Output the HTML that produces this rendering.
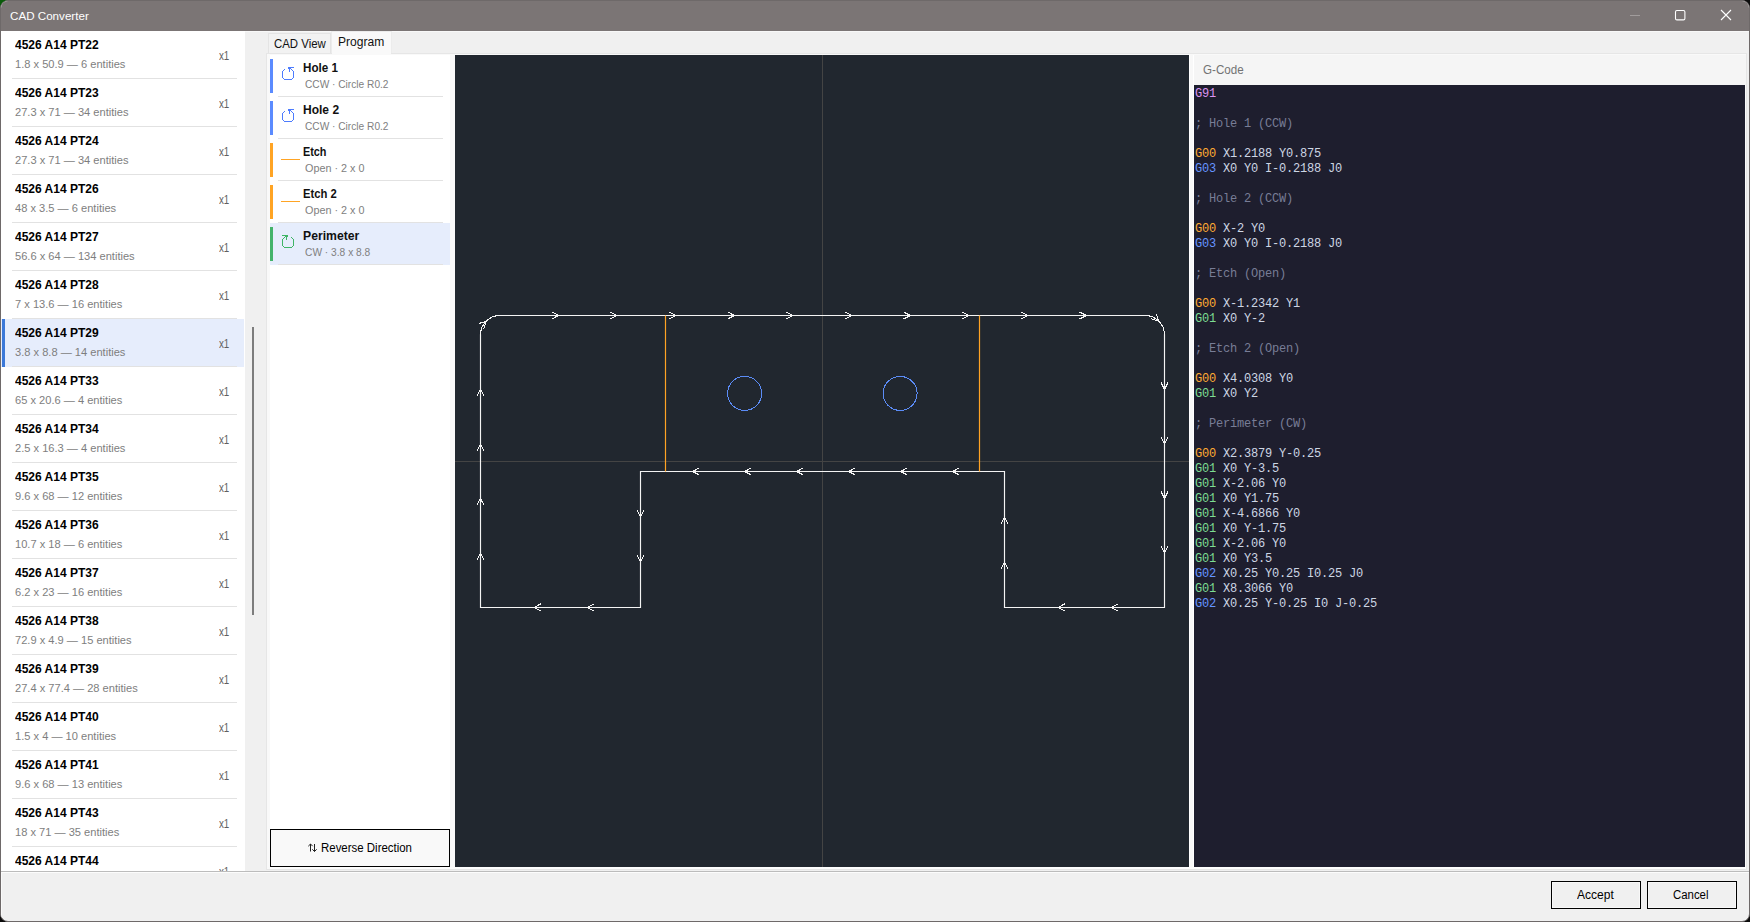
<!DOCTYPE html>
<html><head><meta charset="utf-8"><title>CAD Converter</title>
<style>
html,body{margin:0;padding:0;}
body{width:1750px;height:922px;overflow:hidden;background:#0b0b0b;position:relative;
 font-family:"Liberation Sans",sans-serif;}
.t{position:absolute;white-space:pre;line-height:1;transform-origin:0 50%;display:inline-block;}
.s{font-family:"Liberation Sans",sans-serif;}
.m{font-family:"Liberation Mono",monospace;}
.a{position:absolute;}
#win{position:absolute;left:0;top:0;width:1748px;height:920px;border:1px solid #6e6969;
 border-radius:8px;background:#f0f0f0;overflow:hidden;}
#in{position:absolute;left:-1px;top:-1px;width:1750px;height:922px;}
</style></head><body>
<div class="a" style="left:0;top:0;width:12px;height:12px;background:#0a5a0a"></div>
<div id="win"><div id="in">

<div class="a" style="left:0;top:0;width:1750px;height:31px;background:#7b7575"></div>
<span id="t1" class="t s" style="left:9.60px;top:10.20px;font-size:11.7px;color:#fff;font-weight:400;transform:scaleX(0.9943);">CAD Converter</span>
<svg class="a" style="left:1620px;top:0" width="130" height="31" viewBox="1620 0 130 31" fill="none"><path d="M1630 15.5H1640" stroke="#a19c9c" stroke-width="1"/><rect x="1675.5" y="10.5" width="9.4" height="9.4" rx="1.4" stroke="#fff" stroke-width="1.1"/><path d="M1721 10L1731 20M1731 10L1721 20" stroke="#fff" stroke-width="1.1"/></svg>
<div class="a" style="left:245px;top:31px;width:1504px;height:1px;background:#f8f8f8"></div>
<div class="a" style="left:1px;top:31px;width:244px;height:840px;background:#fff;overflow:hidden">
<div class="a" style="left:11px;top:47px;width:225px;height:1px;background:#e2e2e2"></div>
<span id="t2" class="t s" style="left:14.30px;top:8.14px;font-size:12px;color:#000;font-weight:700;transform:scaleX(0.9997);">4526 A14 PT22</span>
<span id="t3" class="t s" style="left:14.00px;top:27.59px;font-size:11px;color:#7e7e7e;font-weight:400;transform:scaleX(1.0087);">1.8 x 50.9 — 6 entities</span>
<span id="t4" class="t s" style="left:217.70px;top:18.84px;font-size:12px;color:#606060;font-weight:400;transform:scaleX(0.8118);">x1</span>
<div class="a" style="left:11px;top:95px;width:225px;height:1px;background:#e2e2e2"></div>
<span id="t5" class="t s" style="left:14.30px;top:56.14px;font-size:12px;color:#000;font-weight:700;transform:scaleX(0.9997);">4526 A14 PT23</span>
<span id="t6" class="t s" style="left:14.00px;top:75.59px;font-size:11px;color:#7e7e7e;font-weight:400;transform:scaleX(1.0087);">27.3 x 71 — 34 entities</span>
<span id="t7" class="t s" style="left:217.70px;top:66.84px;font-size:12px;color:#606060;font-weight:400;transform:scaleX(0.8118);">x1</span>
<div class="a" style="left:11px;top:143px;width:225px;height:1px;background:#e2e2e2"></div>
<span id="t8" class="t s" style="left:14.30px;top:104.14px;font-size:12px;color:#000;font-weight:700;transform:scaleX(0.9997);">4526 A14 PT24</span>
<span id="t9" class="t s" style="left:14.00px;top:123.59px;font-size:11px;color:#7e7e7e;font-weight:400;transform:scaleX(1.0087);">27.3 x 71 — 34 entities</span>
<span id="t10" class="t s" style="left:217.70px;top:114.84px;font-size:12px;color:#606060;font-weight:400;transform:scaleX(0.8118);">x1</span>
<div class="a" style="left:11px;top:191px;width:225px;height:1px;background:#e2e2e2"></div>
<span id="t11" class="t s" style="left:14.30px;top:152.14px;font-size:12px;color:#000;font-weight:700;transform:scaleX(0.9997);">4526 A14 PT26</span>
<span id="t12" class="t s" style="left:14.00px;top:171.59px;font-size:11px;color:#7e7e7e;font-weight:400;transform:scaleX(1.0087);">48 x 3.5 — 6 entities</span>
<span id="t13" class="t s" style="left:217.70px;top:162.84px;font-size:12px;color:#606060;font-weight:400;transform:scaleX(0.8118);">x1</span>
<div class="a" style="left:11px;top:239px;width:225px;height:1px;background:#e2e2e2"></div>
<span id="t14" class="t s" style="left:14.30px;top:200.14px;font-size:12px;color:#000;font-weight:700;transform:scaleX(0.9997);">4526 A14 PT27</span>
<span id="t15" class="t s" style="left:14.00px;top:219.59px;font-size:11px;color:#7e7e7e;font-weight:400;transform:scaleX(1.0087);">56.6 x 64 — 134 entities</span>
<span id="t16" class="t s" style="left:217.70px;top:210.84px;font-size:12px;color:#606060;font-weight:400;transform:scaleX(0.8118);">x1</span>
<div class="a" style="left:11px;top:287px;width:225px;height:1px;background:#e2e2e2"></div>
<span id="t17" class="t s" style="left:14.30px;top:248.14px;font-size:12px;color:#000;font-weight:700;transform:scaleX(0.9997);">4526 A14 PT28</span>
<span id="t18" class="t s" style="left:14.00px;top:267.59px;font-size:11px;color:#7e7e7e;font-weight:400;transform:scaleX(1.0087);">7 x 13.6 — 16 entities</span>
<span id="t19" class="t s" style="left:217.70px;top:258.84px;font-size:12px;color:#606060;font-weight:400;transform:scaleX(0.8118);">x1</span>
<div class="a" style="left:0;top:288px;width:243px;height:48px;background:#e6edfc"></div>
<div class="a" style="left:1px;top:288px;width:3px;height:48px;background:#3b78d8"></div>
<div class="a" style="left:11px;top:335px;width:225px;height:1px;background:#e2e2e2"></div>
<span id="t20" class="t s" style="left:14.30px;top:296.14px;font-size:12px;color:#000;font-weight:700;transform:scaleX(0.9997);">4526 A14 PT29</span>
<span id="t21" class="t s" style="left:14.00px;top:315.59px;font-size:11px;color:#7e7e7e;font-weight:400;transform:scaleX(1.0087);">3.8 x 8.8 — 14 entities</span>
<span id="t22" class="t s" style="left:217.70px;top:306.84px;font-size:12px;color:#606060;font-weight:400;transform:scaleX(0.8118);">x1</span>
<div class="a" style="left:11px;top:383px;width:225px;height:1px;background:#e2e2e2"></div>
<span id="t23" class="t s" style="left:14.30px;top:344.14px;font-size:12px;color:#000;font-weight:700;transform:scaleX(0.9997);">4526 A14 PT33</span>
<span id="t24" class="t s" style="left:14.00px;top:363.59px;font-size:11px;color:#7e7e7e;font-weight:400;transform:scaleX(1.0087);">65 x 20.6 — 4 entities</span>
<span id="t25" class="t s" style="left:217.70px;top:354.84px;font-size:12px;color:#606060;font-weight:400;transform:scaleX(0.8118);">x1</span>
<div class="a" style="left:11px;top:431px;width:225px;height:1px;background:#e2e2e2"></div>
<span id="t26" class="t s" style="left:14.30px;top:392.14px;font-size:12px;color:#000;font-weight:700;transform:scaleX(0.9997);">4526 A14 PT34</span>
<span id="t27" class="t s" style="left:14.00px;top:411.59px;font-size:11px;color:#7e7e7e;font-weight:400;transform:scaleX(1.0087);">2.5 x 16.3 — 4 entities</span>
<span id="t28" class="t s" style="left:217.70px;top:402.84px;font-size:12px;color:#606060;font-weight:400;transform:scaleX(0.8118);">x1</span>
<div class="a" style="left:11px;top:479px;width:225px;height:1px;background:#e2e2e2"></div>
<span id="t29" class="t s" style="left:14.30px;top:440.14px;font-size:12px;color:#000;font-weight:700;transform:scaleX(0.9997);">4526 A14 PT35</span>
<span id="t30" class="t s" style="left:14.00px;top:459.59px;font-size:11px;color:#7e7e7e;font-weight:400;transform:scaleX(1.0087);">9.6 x 68 — 12 entities</span>
<span id="t31" class="t s" style="left:217.70px;top:450.84px;font-size:12px;color:#606060;font-weight:400;transform:scaleX(0.8118);">x1</span>
<div class="a" style="left:11px;top:527px;width:225px;height:1px;background:#e2e2e2"></div>
<span id="t32" class="t s" style="left:14.30px;top:488.14px;font-size:12px;color:#000;font-weight:700;transform:scaleX(0.9997);">4526 A14 PT36</span>
<span id="t33" class="t s" style="left:14.00px;top:507.59px;font-size:11px;color:#7e7e7e;font-weight:400;transform:scaleX(1.0087);">10.7 x 18 — 6 entities</span>
<span id="t34" class="t s" style="left:217.70px;top:498.84px;font-size:12px;color:#606060;font-weight:400;transform:scaleX(0.8118);">x1</span>
<div class="a" style="left:11px;top:575px;width:225px;height:1px;background:#e2e2e2"></div>
<span id="t35" class="t s" style="left:14.30px;top:536.14px;font-size:12px;color:#000;font-weight:700;transform:scaleX(0.9997);">4526 A14 PT37</span>
<span id="t36" class="t s" style="left:14.00px;top:555.59px;font-size:11px;color:#7e7e7e;font-weight:400;transform:scaleX(1.0087);">6.2 x 23 — 16 entities</span>
<span id="t37" class="t s" style="left:217.70px;top:546.84px;font-size:12px;color:#606060;font-weight:400;transform:scaleX(0.8118);">x1</span>
<div class="a" style="left:11px;top:623px;width:225px;height:1px;background:#e2e2e2"></div>
<span id="t38" class="t s" style="left:14.30px;top:584.14px;font-size:12px;color:#000;font-weight:700;transform:scaleX(0.9997);">4526 A14 PT38</span>
<span id="t39" class="t s" style="left:14.00px;top:603.59px;font-size:11px;color:#7e7e7e;font-weight:400;transform:scaleX(1.0087);">72.9 x 4.9 — 15 entities</span>
<span id="t40" class="t s" style="left:217.70px;top:594.84px;font-size:12px;color:#606060;font-weight:400;transform:scaleX(0.8118);">x1</span>
<div class="a" style="left:11px;top:671px;width:225px;height:1px;background:#e2e2e2"></div>
<span id="t41" class="t s" style="left:14.30px;top:632.14px;font-size:12px;color:#000;font-weight:700;transform:scaleX(0.9997);">4526 A14 PT39</span>
<span id="t42" class="t s" style="left:14.00px;top:651.59px;font-size:11px;color:#7e7e7e;font-weight:400;transform:scaleX(1.0087);">27.4 x 77.4 — 28 entities</span>
<span id="t43" class="t s" style="left:217.70px;top:642.84px;font-size:12px;color:#606060;font-weight:400;transform:scaleX(0.8118);">x1</span>
<div class="a" style="left:11px;top:719px;width:225px;height:1px;background:#e2e2e2"></div>
<span id="t44" class="t s" style="left:14.30px;top:680.14px;font-size:12px;color:#000;font-weight:700;transform:scaleX(0.9997);">4526 A14 PT40</span>
<span id="t45" class="t s" style="left:14.00px;top:699.59px;font-size:11px;color:#7e7e7e;font-weight:400;transform:scaleX(1.0087);">1.5 x 4 — 10 entities</span>
<span id="t46" class="t s" style="left:217.70px;top:690.84px;font-size:12px;color:#606060;font-weight:400;transform:scaleX(0.8118);">x1</span>
<div class="a" style="left:11px;top:767px;width:225px;height:1px;background:#e2e2e2"></div>
<span id="t47" class="t s" style="left:14.30px;top:728.14px;font-size:12px;color:#000;font-weight:700;transform:scaleX(0.9997);">4526 A14 PT41</span>
<span id="t48" class="t s" style="left:14.00px;top:747.59px;font-size:11px;color:#7e7e7e;font-weight:400;transform:scaleX(1.0087);">9.6 x 68 — 13 entities</span>
<span id="t49" class="t s" style="left:217.70px;top:738.84px;font-size:12px;color:#606060;font-weight:400;transform:scaleX(0.8118);">x1</span>
<div class="a" style="left:11px;top:815px;width:225px;height:1px;background:#e2e2e2"></div>
<span id="t50" class="t s" style="left:14.30px;top:776.14px;font-size:12px;color:#000;font-weight:700;transform:scaleX(0.9997);">4526 A14 PT43</span>
<span id="t51" class="t s" style="left:14.00px;top:795.59px;font-size:11px;color:#7e7e7e;font-weight:400;transform:scaleX(1.0087);">18 x 71 — 35 entities</span>
<span id="t52" class="t s" style="left:217.70px;top:786.84px;font-size:12px;color:#606060;font-weight:400;transform:scaleX(0.8118);">x1</span>
<div class="a" style="left:11px;top:863px;width:225px;height:1px;background:#e2e2e2"></div>
<span id="t53" class="t s" style="left:14.30px;top:824.14px;font-size:12px;color:#000;font-weight:700;transform:scaleX(0.9997);">4526 A14 PT44</span>
<span id="t54" class="t s" style="left:217.70px;top:834.84px;font-size:12px;color:#606060;font-weight:400;transform:scaleX(0.8118);">x1</span>
</div>
<div class="a" style="left:252px;top:327px;width:2px;height:288px;background:#7d7d7d"></div>
<div class="a" style="left:268px;top:33px;width:63px;height:21px;background:#f2f2f2;border:1px solid #e4e4e4;box-sizing:border-box"></div>
<div class="a" style="left:331px;top:31px;width:61px;height:23px;background:#f9f9f9;border:1px solid #ececec;border-bottom:none;box-sizing:border-box"></div>
<span id="t55" class="t s" style="left:273.80px;top:37.64px;font-size:12px;color:#111;font-weight:400;transform:scaleX(0.9510);">CAD View</span>
<span id="t56" class="t s" style="left:337.60px;top:36.04px;font-size:12px;color:#111;font-weight:400;transform:scaleX(1.0062);">Program</span>
<div class="a" style="left:266px;top:53px;width:1481px;height:817px;background:#f9f9f9;border:1px solid #e6e6e6;box-sizing:border-box"></div>
<div class="a" style="left:332px;top:53px;width:59px;height:1px;background:#f9f9f9"></div>
<div class="a" style="left:270px;top:55px;width:180px;height:774px;background:#fff"></div>
<div class="a" style="left:278px;top:96px;width:165px;height:1px;background:#e2e2e2"></div>
<div class="a" style="left:270px;top:59px;width:3px;height:34px;background:#5b8bff"></div>
<svg class="a" style="left:276px;top:55px" width="24" height="30" viewBox="276 55 24 30" shape-rendering="crispEdges"><path d="M288 67h6v1h-6zM288 68h3v1h-3zM289 69h1v3h-1zM284 69h1v1h-1zM283 70h1v1h-1zM282 71h1v7h-1zM283 78h1v1h-1zM284 79h8v1h-8zM292 78h1v1h-1zM293 71h1v7h-1zM292 70h1v1h-1zM291 69h1v1h-1z" fill="#4d7cfe"/></svg>
<span id="t57" class="t s" style="left:303.40px;top:61.64px;font-size:12px;color:#111;font-weight:700;transform:scaleX(0.9690);">Hole 1</span>
<span id="t58" class="t s" style="left:304.50px;top:78.91px;font-size:10.5px;color:#808080;font-weight:400;transform:scaleX(0.9671);">CCW · Circle R0.2</span>
<div class="a" style="left:278px;top:138px;width:165px;height:1px;background:#e2e2e2"></div>
<div class="a" style="left:270px;top:101px;width:3px;height:34px;background:#5b8bff"></div>
<svg class="a" style="left:276px;top:97px" width="24" height="30" viewBox="276 97 24 30" shape-rendering="crispEdges"><path d="M288 109h6v1h-6zM288 110h3v1h-3zM289 111h1v3h-1zM284 111h1v1h-1zM283 112h1v1h-1zM282 113h1v7h-1zM283 120h1v1h-1zM284 121h8v1h-8zM292 120h1v1h-1zM293 113h1v7h-1zM292 112h1v1h-1zM291 111h1v1h-1z" fill="#4d7cfe"/></svg>
<span id="t59" class="t s" style="left:303.40px;top:103.64px;font-size:12px;color:#111;font-weight:700;transform:scaleX(1.0023);">Hole 2</span>
<span id="t60" class="t s" style="left:304.50px;top:120.91px;font-size:10.5px;color:#808080;font-weight:400;transform:scaleX(0.9671);">CCW · Circle R0.2</span>
<div class="a" style="left:278px;top:180px;width:165px;height:1px;background:#e2e2e2"></div>
<div class="a" style="left:270px;top:143px;width:3px;height:34px;background:#ffa424"></div>
<div class="a" style="left:281px;top:159px;width:19px;height:1px;background:#ffa424"></div>
<span id="t61" class="t s" style="left:303.40px;top:145.64px;font-size:12px;color:#111;font-weight:700;transform:scaleX(0.9033);">Etch</span>
<span id="t62" class="t s" style="left:304.50px;top:162.91px;font-size:10.5px;color:#808080;font-weight:400;transform:scaleX(1.0297);">Open · 2 x 0</span>
<div class="a" style="left:278px;top:222px;width:165px;height:1px;background:#e2e2e2"></div>
<div class="a" style="left:270px;top:185px;width:3px;height:34px;background:#ffa424"></div>
<div class="a" style="left:281px;top:201px;width:19px;height:1px;background:#ffa424"></div>
<span id="t63" class="t s" style="left:303.40px;top:187.64px;font-size:12px;color:#111;font-weight:700;transform:scaleX(0.9385);">Etch 2</span>
<span id="t64" class="t s" style="left:304.50px;top:204.91px;font-size:10.5px;color:#808080;font-weight:400;transform:scaleX(1.0297);">Open · 2 x 0</span>
<div class="a" style="left:270px;top:223px;width:180px;height:42px;background:#e6edfc"></div>
<div class="a" style="left:278px;top:264px;width:165px;height:1px;background:#e2e2e2"></div>
<div class="a" style="left:270px;top:227px;width:3px;height:34px;background:#44b36b"></div>
<svg class="a" style="left:276px;top:223px" width="24" height="30" viewBox="276 223 24 30" shape-rendering="crispEdges"><path d="M282 235h6v1h-6zM285 236h3v1h-3zM286 237h1v3h-1zM291 237h1v1h-1zM292 238h1v1h-1zM293 239h1v7h-1zM292 246h1v1h-1zM284 247h8v1h-8zM283 246h1v1h-1zM282 239h1v7h-1zM283 238h1v1h-1zM284 237h1v1h-1z" fill="#3fb566"/></svg>
<span id="t65" class="t s" style="left:303.40px;top:229.64px;font-size:12px;color:#111;font-weight:700;transform:scaleX(1.0167);">Perimeter</span>
<span id="t66" class="t s" style="left:304.50px;top:246.91px;font-size:10.5px;color:#808080;font-weight:400;transform:scaleX(0.9730);">CW · 3.8 x 8.8</span>
<div class="a" style="left:270px;top:829px;width:180px;height:38px;background:#f9f9f9;border:1px solid #000;box-sizing:border-box"></div>
<svg class="a" style="left:306px;top:840px" width="14" height="14" viewBox="306 840 14 14" fill="none"><path d="M310.5 851.5V844 M308.3 846.2L310.5 844L312.7 846.2 M314.5 844V851.5 M312.3 849.3L314.5 851.5L316.7 849.3" stroke="#222" stroke-width="1"/></svg>
<span id="t67" class="t s" style="left:320.80px;top:841.64px;font-size:12px;color:#000;font-weight:400;transform:scaleX(0.9541);">Reverse Direction</span>
<svg class="a" style="left:455px;top:55px;background:#21272f" width="734" height="812" viewBox="455 55 734 812" fill="none">
<path d="M822.5 55V867" stroke="#444444" stroke-width="1"/>
<path d="M455 461.5H1189" stroke="#444444" stroke-width="1"/>
<path d="M1164.50 334.92 V607.45 H1004.50 V471.50 H640.50 V607.45 H480.50 V334.92 M499.92 315.50 H1145.08" stroke="#f4f4f4" stroke-width="1.15" stroke-linecap="square"/>
<path d="M480.50 334.92 A19.42 19.42 0 0 1 499.92 315.50 M1145.08 315.50 A19.42 19.42 0 0 1 1164.50 334.92" stroke="#f4f4f4" stroke-width="1" shape-rendering="crispEdges"/>
<path d="M1160.91 382.39 L1164.50 389.42 L1168.09 382.39 M1160.91 436.89 L1164.50 443.93 L1168.09 436.89 M1160.91 491.40 L1164.50 498.44 L1168.09 491.40 M1160.91 545.90 L1164.50 552.94 L1168.09 545.90 M1118.21 603.86 L1111.17 607.45 L1118.21 611.04 M1064.87 603.86 L1057.83 607.45 L1064.87 611.04 M1008.09 569.17 L1004.50 562.13 L1000.91 569.17 M1008.09 523.86 L1004.50 516.82 L1000.91 523.86 M959.54 467.91 L952.50 471.50 L959.54 475.09 M907.54 467.91 L900.50 471.50 L907.54 475.09 M855.54 467.91 L848.50 471.50 L855.54 475.09 M803.54 467.91 L796.50 471.50 L803.54 475.09 M751.54 467.91 L744.50 471.50 L751.54 475.09 M699.54 467.91 L692.50 471.50 L699.54 475.09 M636.91 509.78 L640.50 516.82 L644.09 509.78 M636.91 555.09 L640.50 562.13 L644.09 555.09 M594.21 603.86 L587.17 607.45 L594.21 611.04 M540.87 603.86 L533.83 607.45 L540.87 611.04 M484.09 559.98 L480.50 552.94 L476.91 559.98 M484.09 505.48 L480.50 498.44 L476.91 505.48 M484.09 450.97 L480.50 443.93 L476.91 450.97 M484.09 396.46 L480.50 389.42 L476.91 396.46 M551.53 319.09 L558.57 315.50 L551.53 311.91 M610.18 319.09 L617.22 315.50 L610.18 311.91 M668.83 319.09 L675.87 315.50 L668.83 311.91 M727.48 319.09 L734.52 315.50 L727.48 311.91 M786.14 319.09 L793.17 315.50 L786.14 311.91 M844.79 319.09 L851.83 315.50 L844.79 311.91 M903.44 319.09 L910.48 315.50 L903.44 311.91 M962.09 319.09 L969.13 315.50 L962.09 311.91 M1020.74 319.09 L1027.78 315.50 L1020.74 311.91 M1079.39 319.09 L1086.43 315.50 L1079.39 311.91 M483.75 328.70 L486.19 321.19 L478.67 323.63 M1151.30 318.75 L1158.81 321.19 L1156.37 313.67" stroke="#f4f4f4" stroke-width="1" shape-rendering="crispEdges"/>
<path d="M665.5 315.50V471.50 M979.5 315.50V471.50" stroke="#ffa224" stroke-width="1.2"/>
<circle cx="744.6" cy="393.4" r="17.0" stroke="#5b8cf7" stroke-width="1" shape-rendering="crispEdges"/>
<circle cx="900.1" cy="393.4" r="17.0" stroke="#5b8cf7" stroke-width="1" shape-rendering="crispEdges"/>
</svg>
<div class="a" style="left:1189px;top:55px;width:5px;height:814px;background:#fff"></div>
<div class="a" style="left:1190px;top:55px;width:3px;height:812px;background:#f8f8f8"></div>
<div class="a" style="left:1194px;top:55px;width:552px;height:30px;background:#f5f5f5"></div>
<span id="t68" class="t s" style="left:1203.20px;top:63.64px;font-size:12px;color:#727272;font-weight:400;transform:scaleX(0.9659);">G-Code</span>
<div class="a" style="left:1194px;top:85px;width:551px;height:782px;background:#1e1e2e"></div>
<div class="a" style="left:270px;top:867px;width:1476px;height:2px;background:#fdfdfd"></div>
<span id="t69" class="t m" style="left:1195.00px;top:87.80px;font-size:12px;color:#dc94f0;font-weight:400;letter-spacing:-0.2px;">G91</span>
<span id="t70" class="t m" style="left:1195.00px;top:117.80px;font-size:12px;color:#787d96;font-weight:400;letter-spacing:-0.2px;">; Hole 1 (CCW)</span>
<span id="t71" class="t m" style="left:1195.00px;top:147.80px;font-size:12px;color:#ffaa33;font-weight:400;letter-spacing:-0.2px;">G00</span>
<span id="t72" class="t m" style="left:1216.00px;top:147.80px;font-size:12px;color:#cdd6e4;font-weight:400;letter-spacing:-0.2px;"> X1.2188 Y0.875</span>
<span id="t73" class="t m" style="left:1195.00px;top:162.80px;font-size:12px;color:#6694ff;font-weight:400;letter-spacing:-0.2px;">G03</span>
<span id="t74" class="t m" style="left:1216.00px;top:162.80px;font-size:12px;color:#cdd6e4;font-weight:400;letter-spacing:-0.2px;"> X0 Y0 I-0.2188 J0</span>
<span id="t75" class="t m" style="left:1195.00px;top:192.80px;font-size:12px;color:#787d96;font-weight:400;letter-spacing:-0.2px;">; Hole 2 (CCW)</span>
<span id="t76" class="t m" style="left:1195.00px;top:222.80px;font-size:12px;color:#ffaa33;font-weight:400;letter-spacing:-0.2px;">G00</span>
<span id="t77" class="t m" style="left:1216.00px;top:222.80px;font-size:12px;color:#cdd6e4;font-weight:400;letter-spacing:-0.2px;"> X-2 Y0</span>
<span id="t78" class="t m" style="left:1195.00px;top:237.80px;font-size:12px;color:#6694ff;font-weight:400;letter-spacing:-0.2px;">G03</span>
<span id="t79" class="t m" style="left:1216.00px;top:237.80px;font-size:12px;color:#cdd6e4;font-weight:400;letter-spacing:-0.2px;"> X0 Y0 I-0.2188 J0</span>
<span id="t80" class="t m" style="left:1195.00px;top:267.80px;font-size:12px;color:#787d96;font-weight:400;letter-spacing:-0.2px;">; Etch (Open)</span>
<span id="t81" class="t m" style="left:1195.00px;top:297.80px;font-size:12px;color:#ffaa33;font-weight:400;letter-spacing:-0.2px;">G00</span>
<span id="t82" class="t m" style="left:1216.00px;top:297.80px;font-size:12px;color:#cdd6e4;font-weight:400;letter-spacing:-0.2px;"> X-1.2342 Y1</span>
<span id="t83" class="t m" style="left:1195.00px;top:312.80px;font-size:12px;color:#7ddc92;font-weight:400;letter-spacing:-0.2px;">G01</span>
<span id="t84" class="t m" style="left:1216.00px;top:312.80px;font-size:12px;color:#cdd6e4;font-weight:400;letter-spacing:-0.2px;"> X0 Y-2</span>
<span id="t85" class="t m" style="left:1195.00px;top:342.80px;font-size:12px;color:#787d96;font-weight:400;letter-spacing:-0.2px;">; Etch 2 (Open)</span>
<span id="t86" class="t m" style="left:1195.00px;top:372.80px;font-size:12px;color:#ffaa33;font-weight:400;letter-spacing:-0.2px;">G00</span>
<span id="t87" class="t m" style="left:1216.00px;top:372.80px;font-size:12px;color:#cdd6e4;font-weight:400;letter-spacing:-0.2px;"> X4.0308 Y0</span>
<span id="t88" class="t m" style="left:1195.00px;top:387.80px;font-size:12px;color:#7ddc92;font-weight:400;letter-spacing:-0.2px;">G01</span>
<span id="t89" class="t m" style="left:1216.00px;top:387.80px;font-size:12px;color:#cdd6e4;font-weight:400;letter-spacing:-0.2px;"> X0 Y2</span>
<span id="t90" class="t m" style="left:1195.00px;top:417.80px;font-size:12px;color:#787d96;font-weight:400;letter-spacing:-0.2px;">; Perimeter (CW)</span>
<span id="t91" class="t m" style="left:1195.00px;top:447.80px;font-size:12px;color:#ffaa33;font-weight:400;letter-spacing:-0.2px;">G00</span>
<span id="t92" class="t m" style="left:1216.00px;top:447.80px;font-size:12px;color:#cdd6e4;font-weight:400;letter-spacing:-0.2px;"> X2.3879 Y-0.25</span>
<span id="t93" class="t m" style="left:1195.00px;top:462.80px;font-size:12px;color:#7ddc92;font-weight:400;letter-spacing:-0.2px;">G01</span>
<span id="t94" class="t m" style="left:1216.00px;top:462.80px;font-size:12px;color:#cdd6e4;font-weight:400;letter-spacing:-0.2px;"> X0 Y-3.5</span>
<span id="t95" class="t m" style="left:1195.00px;top:477.80px;font-size:12px;color:#7ddc92;font-weight:400;letter-spacing:-0.2px;">G01</span>
<span id="t96" class="t m" style="left:1216.00px;top:477.80px;font-size:12px;color:#cdd6e4;font-weight:400;letter-spacing:-0.2px;"> X-2.06 Y0</span>
<span id="t97" class="t m" style="left:1195.00px;top:492.80px;font-size:12px;color:#7ddc92;font-weight:400;letter-spacing:-0.2px;">G01</span>
<span id="t98" class="t m" style="left:1216.00px;top:492.80px;font-size:12px;color:#cdd6e4;font-weight:400;letter-spacing:-0.2px;"> X0 Y1.75</span>
<span id="t99" class="t m" style="left:1195.00px;top:507.80px;font-size:12px;color:#7ddc92;font-weight:400;letter-spacing:-0.2px;">G01</span>
<span id="t100" class="t m" style="left:1216.00px;top:507.80px;font-size:12px;color:#cdd6e4;font-weight:400;letter-spacing:-0.2px;"> X-4.6866 Y0</span>
<span id="t101" class="t m" style="left:1195.00px;top:522.80px;font-size:12px;color:#7ddc92;font-weight:400;letter-spacing:-0.2px;">G01</span>
<span id="t102" class="t m" style="left:1216.00px;top:522.80px;font-size:12px;color:#cdd6e4;font-weight:400;letter-spacing:-0.2px;"> X0 Y-1.75</span>
<span id="t103" class="t m" style="left:1195.00px;top:537.80px;font-size:12px;color:#7ddc92;font-weight:400;letter-spacing:-0.2px;">G01</span>
<span id="t104" class="t m" style="left:1216.00px;top:537.80px;font-size:12px;color:#cdd6e4;font-weight:400;letter-spacing:-0.2px;"> X-2.06 Y0</span>
<span id="t105" class="t m" style="left:1195.00px;top:552.80px;font-size:12px;color:#7ddc92;font-weight:400;letter-spacing:-0.2px;">G01</span>
<span id="t106" class="t m" style="left:1216.00px;top:552.80px;font-size:12px;color:#cdd6e4;font-weight:400;letter-spacing:-0.2px;"> X0 Y3.5</span>
<span id="t107" class="t m" style="left:1195.00px;top:567.80px;font-size:12px;color:#6694ff;font-weight:400;letter-spacing:-0.2px;">G02</span>
<span id="t108" class="t m" style="left:1216.00px;top:567.80px;font-size:12px;color:#cdd6e4;font-weight:400;letter-spacing:-0.2px;"> X0.25 Y0.25 I0.25 J0</span>
<span id="t109" class="t m" style="left:1195.00px;top:582.80px;font-size:12px;color:#7ddc92;font-weight:400;letter-spacing:-0.2px;">G01</span>
<span id="t110" class="t m" style="left:1216.00px;top:582.80px;font-size:12px;color:#cdd6e4;font-weight:400;letter-spacing:-0.2px;"> X8.3066 Y0</span>
<span id="t111" class="t m" style="left:1195.00px;top:597.80px;font-size:12px;color:#6694ff;font-weight:400;letter-spacing:-0.2px;">G02</span>
<span id="t112" class="t m" style="left:1216.00px;top:597.80px;font-size:12px;color:#cdd6e4;font-weight:400;letter-spacing:-0.2px;"> X0.25 Y-0.25 I0 J-0.25</span>
<div class="a" style="left:0;top:871px;width:1750px;height:1px;background:#bcbcbc"></div>
<div class="a" style="left:0;top:872px;width:1750px;height:1px;background:#fcfcfc"></div>
<div class="a" style="left:1px;top:873px;width:1px;height:48px;background:#fafafa"></div>
<div class="a" style="left:1551px;top:881px;width:90px;height:28px;background:#f0f0f0;border:1px solid #000;box-sizing:border-box;box-shadow:inset 0 0 0 1px #f8f8f8"></div>
<span id="t113" class="t s" style="left:1577.00px;top:888.84px;font-size:12px;color:#000;font-weight:400;transform:scaleX(1.0031);">Accept</span>
<div class="a" style="left:1647px;top:881px;width:90px;height:28px;background:#f0f0f0;border:1px solid #000;box-sizing:border-box;box-shadow:inset 0 0 0 1px #f8f8f8"></div>
<span id="t114" class="t s" style="left:1673.30px;top:888.84px;font-size:12px;color:#000;font-weight:400;transform:scaleX(0.9502);">Cancel</span>
</div></div>
</body></html>
